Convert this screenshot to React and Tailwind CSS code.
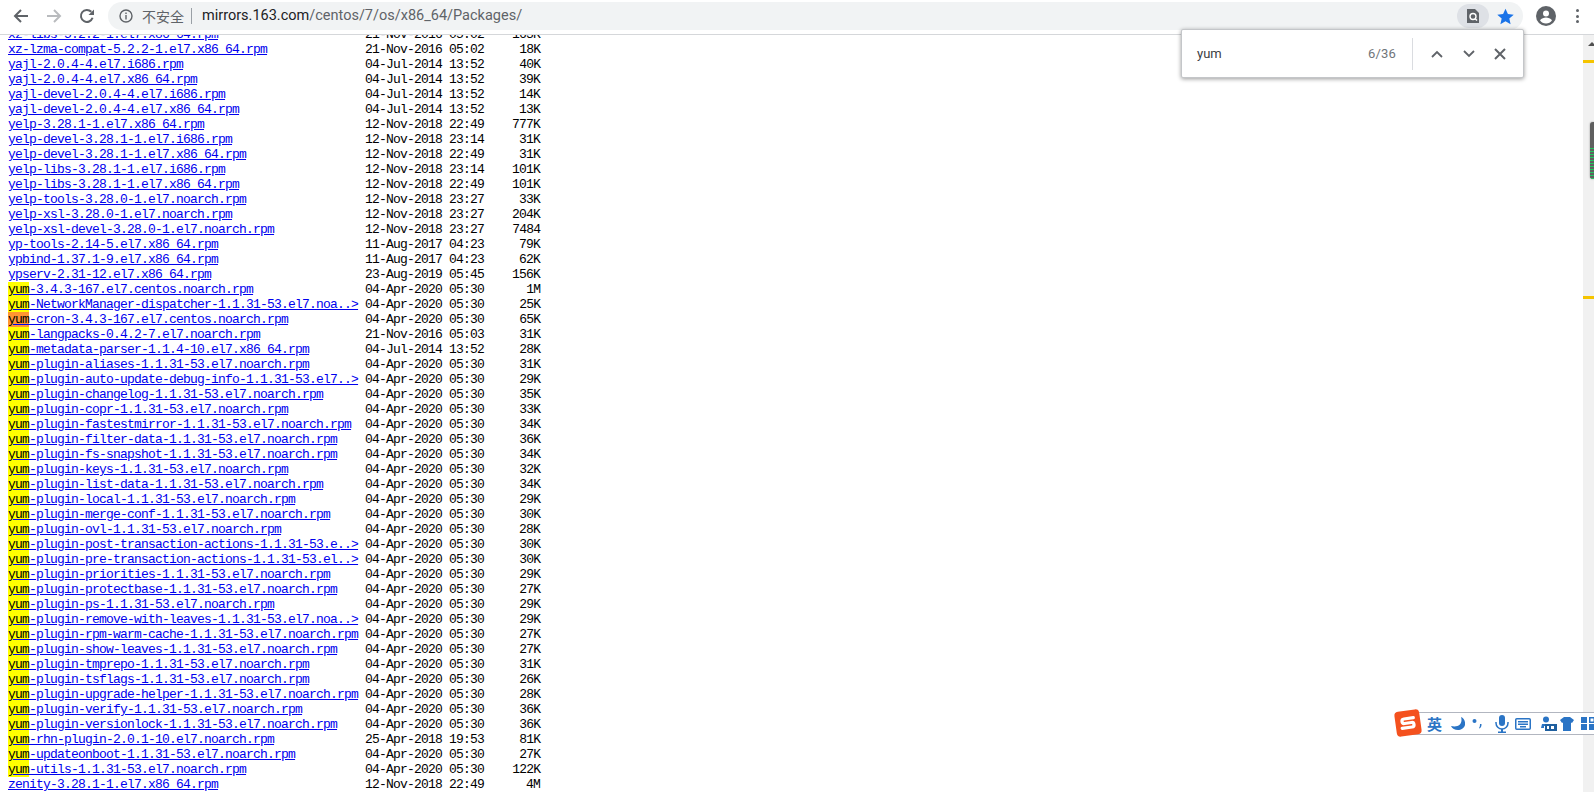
import { Fragment } from 'react';

// listing rows: [name, date, size]
const ROWS = [
  ['xz-libs-5.2.2-1.el7.x86_64.rpm', '21-Nov-2016 05:02', '163K'],
  ['xz-lzma-compat-5.2.2-1.el7.x86_64.rpm', '21-Nov-2016 05:02', '18K'],
  ['yajl-2.0.4-4.el7.i686.rpm', '04-Jul-2014 13:52', '40K'],
  ['yajl-2.0.4-4.el7.x86_64.rpm', '04-Jul-2014 13:52', '39K'],
  ['yajl-devel-2.0.4-4.el7.i686.rpm', '04-Jul-2014 13:52', '14K'],
  ['yajl-devel-2.0.4-4.el7.x86_64.rpm', '04-Jul-2014 13:52', '13K'],
  ['yelp-3.28.1-1.el7.x86_64.rpm', '12-Nov-2018 22:49', '777K'],
  ['yelp-devel-3.28.1-1.el7.i686.rpm', '12-Nov-2018 23:14', '31K'],
  ['yelp-devel-3.28.1-1.el7.x86_64.rpm', '12-Nov-2018 22:49', '31K'],
  ['yelp-libs-3.28.1-1.el7.i686.rpm', '12-Nov-2018 23:14', '101K'],
  ['yelp-libs-3.28.1-1.el7.x86_64.rpm', '12-Nov-2018 22:49', '101K'],
  ['yelp-tools-3.28.0-1.el7.noarch.rpm', '12-Nov-2018 23:27', '33K'],
  ['yelp-xsl-3.28.0-1.el7.noarch.rpm', '12-Nov-2018 23:27', '204K'],
  ['yelp-xsl-devel-3.28.0-1.el7.noarch.rpm', '12-Nov-2018 23:27', '7484'],
  ['yp-tools-2.14-5.el7.x86_64.rpm', '11-Aug-2017 04:23', '79K'],
  ['ypbind-1.37.1-9.el7.x86_64.rpm', '11-Aug-2017 04:23', '62K'],
  ['ypserv-2.31-12.el7.x86_64.rpm', '23-Aug-2019 05:45', '156K'],
  ['yum-3.4.3-167.el7.centos.noarch.rpm', '04-Apr-2020 05:30', '1M'],
  ['yum-NetworkManager-dispatcher-1.1.31-53.el7.noa..>', '04-Apr-2020 05:30', '25K'],
  ['yum-cron-3.4.3-167.el7.centos.noarch.rpm', '04-Apr-2020 05:30', '65K'],
  ['yum-langpacks-0.4.2-7.el7.noarch.rpm', '21-Nov-2016 05:03', '31K'],
  ['yum-metadata-parser-1.1.4-10.el7.x86_64.rpm', '04-Jul-2014 13:52', '28K'],
  ['yum-plugin-aliases-1.1.31-53.el7.noarch.rpm', '04-Apr-2020 05:30', '31K'],
  ['yum-plugin-auto-update-debug-info-1.1.31-53.el7..>', '04-Apr-2020 05:30', '29K'],
  ['yum-plugin-changelog-1.1.31-53.el7.noarch.rpm', '04-Apr-2020 05:30', '35K'],
  ['yum-plugin-copr-1.1.31-53.el7.noarch.rpm', '04-Apr-2020 05:30', '33K'],
  ['yum-plugin-fastestmirror-1.1.31-53.el7.noarch.rpm', '04-Apr-2020 05:30', '34K'],
  ['yum-plugin-filter-data-1.1.31-53.el7.noarch.rpm', '04-Apr-2020 05:30', '36K'],
  ['yum-plugin-fs-snapshot-1.1.31-53.el7.noarch.rpm', '04-Apr-2020 05:30', '34K'],
  ['yum-plugin-keys-1.1.31-53.el7.noarch.rpm', '04-Apr-2020 05:30', '32K'],
  ['yum-plugin-list-data-1.1.31-53.el7.noarch.rpm', '04-Apr-2020 05:30', '34K'],
  ['yum-plugin-local-1.1.31-53.el7.noarch.rpm', '04-Apr-2020 05:30', '29K'],
  ['yum-plugin-merge-conf-1.1.31-53.el7.noarch.rpm', '04-Apr-2020 05:30', '30K'],
  ['yum-plugin-ovl-1.1.31-53.el7.noarch.rpm', '04-Apr-2020 05:30', '28K'],
  ['yum-plugin-post-transaction-actions-1.1.31-53.e..>', '04-Apr-2020 05:30', '30K'],
  ['yum-plugin-pre-transaction-actions-1.1.31-53.el..>', '04-Apr-2020 05:30', '30K'],
  ['yum-plugin-priorities-1.1.31-53.el7.noarch.rpm', '04-Apr-2020 05:30', '29K'],
  ['yum-plugin-protectbase-1.1.31-53.el7.noarch.rpm', '04-Apr-2020 05:30', '27K'],
  ['yum-plugin-ps-1.1.31-53.el7.noarch.rpm', '04-Apr-2020 05:30', '29K'],
  ['yum-plugin-remove-with-leaves-1.1.31-53.el7.noa..>', '04-Apr-2020 05:30', '29K'],
  ['yum-plugin-rpm-warm-cache-1.1.31-53.el7.noarch.rpm', '04-Apr-2020 05:30', '27K'],
  ['yum-plugin-show-leaves-1.1.31-53.el7.noarch.rpm', '04-Apr-2020 05:30', '27K'],
  ['yum-plugin-tmprepo-1.1.31-53.el7.noarch.rpm', '04-Apr-2020 05:30', '31K'],
  ['yum-plugin-tsflags-1.1.31-53.el7.noarch.rpm', '04-Apr-2020 05:30', '26K'],
  ['yum-plugin-upgrade-helper-1.1.31-53.el7.noarch.rpm', '04-Apr-2020 05:30', '28K'],
  ['yum-plugin-verify-1.1.31-53.el7.noarch.rpm', '04-Apr-2020 05:30', '36K'],
  ['yum-plugin-versionlock-1.1.31-53.el7.noarch.rpm', '04-Apr-2020 05:30', '36K'],
  ['yum-rhn-plugin-2.0.1-10.el7.noarch.rpm', '25-Apr-2018 19:53', '81K'],
  ['yum-updateonboot-1.1.31-53.el7.noarch.rpm', '04-Apr-2020 05:30', '27K'],
  ['yum-utils-1.1.31-53.el7.noarch.rpm', '04-Apr-2020 05:30', '122K'],
  ['zenity-3.28.1-1.el7.x86_64.rpm', '12-Nov-2018 22:49', '4M'],
];

function FileName({ name }) {
  if (!name.startsWith('yum')) return name;
  const active = name.startsWith('yum-cron');
  return (
    <>
      <span className={active ? 'bg-[#ff9632] text-black' : 'bg-[#ffff00] text-black'}>yum</span>
      {name.slice(3)}
    </>
  );
}

function Toolbar() {
  return (
    <header className="h-[35px] shrink-0 flex items-start border-b border-[#d5d7da] bg-white">
      <div className="w-[108px] h-[32px] flex items-center shrink-0 pl-[13px] gap-[17px]">
        <svg width="16" height="16" viewBox="0 0 16 16" fill="none" stroke="#5f6368" strokeWidth="2"><path d="M15 8H2M8 2 2 8l6 6" /></svg>
        <svg width="16" height="16" viewBox="0 0 16 16" fill="none" stroke="#b9bbbe" strokeWidth="2"><path d="M1 8h13M8 2l6 6-6 6" /></svg>
        <svg width="16" height="16" viewBox="0 0 16 16" fill="none" stroke="#5f6368" strokeWidth="2"><path d="M13.6 9.8A6 6 0 1 1 12.3 3.8" /><path d="M15 1.5V7H9.5z" fill="#5f6368" stroke="none" /></svg>
      </div>
      <div className="mt-[2px] w-[1415px] h-[28px] rounded-full bg-[#f1f3f4] flex items-center shrink-0 pl-[11px] pr-[3px] font-['Roboto',sans-serif]">
        <svg width="14" height="14" viewBox="0 0 14 14" fill="none" stroke="#5f6368" strokeWidth="1.4"><circle cx="7" cy="7" r="6" /><path d="M7 6v4.4M7 3.4v1.5" /></svg>
        <span className="ml-[6px] pl-[3px] text-[14px] text-[#5f6368] font-['Noto_Sans_CJK_SC','Roboto',sans-serif] leading-none">不安全</span>
        <span className="ml-[7px] w-px h-[16px] bg-[#9aa0a6]" />
        <span className="ml-[10px] text-[14.5px] text-[#5f6368] whitespace-pre"><span className="text-[#202124]">mirrors.163.com</span>/centos/7/os/x86_64/Packages/</span>
        <div className="ml-auto w-[32px] h-[24px] rounded-full bg-[#dee1e6] flex items-center justify-center">
          <svg width="14" height="16" viewBox="0 0 14 16"><path d="M1 1h8l4 4v10H1z" fill="#5f6368" /><circle cx="7" cy="8.5" r="3" fill="none" stroke="#fff" strokeWidth="1.4" /><path d="m9 10.5 2 2" stroke="#fff" strokeWidth="1.4" /></svg>
        </div>
        <svg className="ml-[8px] mr-[6px]" width="17" height="17" viewBox="0 0 24 24" fill="#1a73e8"><path d="m12 1 3.4 7.6 8.2.8-6.2 5.5 1.8 8.1L12 18.8 4.8 23l1.8-8.1L.4 9.4l8.2-.8z" /></svg>
      </div>
      <div className="h-[32px] flex items-center shrink-0 pl-[13px]">
        <svg width="20" height="20" viewBox="0 0 20 20"><circle cx="10" cy="10" r="10" fill="#5f6368" /><circle cx="10" cy="7.5" r="3" fill="#fff" /><path d="M4 14.2c1.5-2 3.800-2.800 6-2.800s4.500.8 6 2.800A7.500 7.500 0 0 1 10 17.500 7.500 7.500 0 0 1 4 14.200z" fill="#fff" /></svg>
        <div className="ml-[20px] flex flex-col gap-[2.5px]">
          <span className="w-[3px] h-[3px] rounded-full bg-[#5f6368]" />
          <span className="w-[3px] h-[3px] rounded-full bg-[#5f6368]" />
          <span className="w-[3px] h-[3px] rounded-full bg-[#5f6368]" />
        </div>
      </div>
    </header>
  );
}

function FindBar() {
  return (
    <div className="absolute left-[1181px] top-[29px] w-[343px] h-[49px] bg-white rounded-[2px] border border-[#c4c6c9] shadow-[0_1px_4px_rgba(0,0,0,0.4)] flex items-center font-['Roboto',sans-serif]">
      <span className="ml-[15px] text-[13px] text-[#3c4043]">yum</span>
      <span className="ml-auto text-[13px] text-[#70757a] tracking-[0.2px]">6/36</span>
      <span className="ml-[16px] w-px h-[32px] bg-[#dadce0]" />
      <svg className="ml-[17px]" width="14" height="10" viewBox="0 0 14 10" fill="none" stroke="#5f6368" strokeWidth="1.8"><path d="m2 8 5-5 5 5" /></svg>
      <svg className="ml-[18px]" width="14" height="10" viewBox="0 0 14 10" fill="none" stroke="#5f6368" strokeWidth="1.8"><path d="m2 2 5 5 5-5" /></svg>
      <svg className="ml-[18px] mr-[17px]" width="12" height="12" viewBox="0 0 12 12" fill="none" stroke="#5f6368" strokeWidth="2"><path d="m1 1 10 10M11 1 1 11" /></svg>
    </div>
  );
}

function ScrollBar() {
  return (
    <aside className="relative w-[11px] shrink-0 bg-[#f1f1f1]">
      <div className="absolute left-[5px] top-[7px] border-x-[4px] border-b-[4px] border-x-transparent border-b-[#505050]" />
      <div className="absolute left-0 right-0 top-[25px] h-[3px] bg-[#f5c400]" />
      <div className="absolute left-0 right-0 top-[261px] h-[3px] bg-[#f5c400]" />
      <div className="absolute left-[7px] right-0 top-[87px] h-[57px] rounded-l-[3px] overflow-hidden bg-[#5f5f5f] shadow-[0_0_2px_rgba(0,0,0,0.4)] pt-[26px]">
        <div className="h-full bg-[repeating-linear-gradient(to_bottom,#22c55e_0,#22c55e_1px,#5f5f5f_1px,#5f5f5f_3px)]" />
      </div>
    </aside>
  );
}

function SogouBar() {
  const blue = '#2a74c5';
  return (
    <div className="absolute left-[1394px] right-0 top-[709px] h-[28px]">
      <div className="absolute left-[14px] right-0 top-[3px] h-[23px] bg-white border-y border-[#b2b6c0] flex items-center overflow-hidden">
        <span className="absolute left-[19px] text-[15px] font-bold leading-none text-[#2a74c5] font-['Noto_Sans_CJK_SC',sans-serif]">英</span>
        <svg className="absolute left-[42px]" width="15" height="15" viewBox="0 0 15 15" fill={blue}><path d="M11 1c2 6-2 11-10 9 2 5 12 6 14-1 .6-3-1-7-4-8z" /></svg>
        <svg className="absolute left-[64px]" width="10" height="12" viewBox="0 0 10 12" fill={blue}><circle cx="2.500" cy="3" r="2" /><path d="M8 6h1.500c.2 2-.6 3.500-2 4.500L7 10c.7-.8 1-2 1-4z" /></svg>
        <svg className="absolute left-[87px]" width="14" height="18" viewBox="0 0 14 18" fill={blue}><rect x="4" y="0" width="6" height="11" rx="3" /><path d="M1 7v1a6 6 0 0 0 12 0V7" fill="none" stroke={blue} strokeWidth="1.500" /><path d="M6 14h2v2.500h3V18H3v-1.500h3z" /></svg>
        <svg className="absolute left-[107px]" width="16" height="12" viewBox="0 0 16 12"><rect x=".75" y=".75" width="14.500" height="10.500" rx="1" fill="none" stroke={blue} strokeWidth="1.500" /><path d="M3 3h10v1.500H3zM3 5.500h10V7H3zM5 8h6v1.500H5z" fill={blue} /></svg>
        <svg className="absolute left-[131px]" width="18" height="15" viewBox="0 0 18 15" fill={blue}><circle cx="7" cy="3.500" r="3" /><path d="M3 8h8v2H5v2H2z" /><rect x="6" y="8" width="12" height="7" fill="#1f5f9f" /><path d="M8 10h2v3H8zM12 10h3v3h-3z" fill="#fff" /></svg>
        <svg className="absolute left-[152px]" width="14" height="14" viewBox="0 0 14 14" fill={blue}><path d="M4 0h6l4 3-2 3-1-.6V14H3V5.400L2 6 0 3z" /></svg>
        <svg className="absolute left-[173px]" width="14" height="13" viewBox="0 0 14 13" fill={blue}><path d="M0 0h6v6H0zM8 0h6v6H8zM0 7h6v6H0zM8 7h6v6H8z" /><path d="M9.500 1.500h3v3h-3z" fill="#fff" /></svg>
      </div>
      <svg className="absolute left-0 top-0 -rotate-[8deg]" width="28" height="28" viewBox="0 0 28 28">
        <rect x="1.500" y="1.500" width="25" height="25" rx="4" fill="#f4511e" />
        <path d="M20 9.500h-9.500c-3 0-3 4.500 0 4.500h7c3 0 3 4.500 0 4.500H7.500" fill="none" stroke="#fff" strokeWidth="3.200" strokeLinecap="round" />
      </svg>
    </div>
  );
}

export default function App() {
  return (
    <div className="relative w-[1594px] h-[792px] overflow-hidden bg-white flex flex-col">
      <Toolbar />
      <div className="flex-1 min-h-0 flex">
        <main className="flex-1 overflow-hidden">
          <pre className="-mt-[8px] pl-[8px] font-['Liberation_Mono',monospace] text-[13px] leading-[15px] tracking-[-0.8px] text-black">
            {ROWS.map(([name, date, size]) => (
              <Fragment key={name}>
                <a href="#" className="text-[#0000ee] underline">
                  <FileName name={name} />
                </a>
                {' '.repeat(51 - name.length)}
                {date}
                {size.padStart(8, ' ')}
                {'\n'}
              </Fragment>
            ))}
          </pre>
        </main>
        <ScrollBar />
      </div>
      <FindBar />
      <SogouBar />
    </div>
  );
}
